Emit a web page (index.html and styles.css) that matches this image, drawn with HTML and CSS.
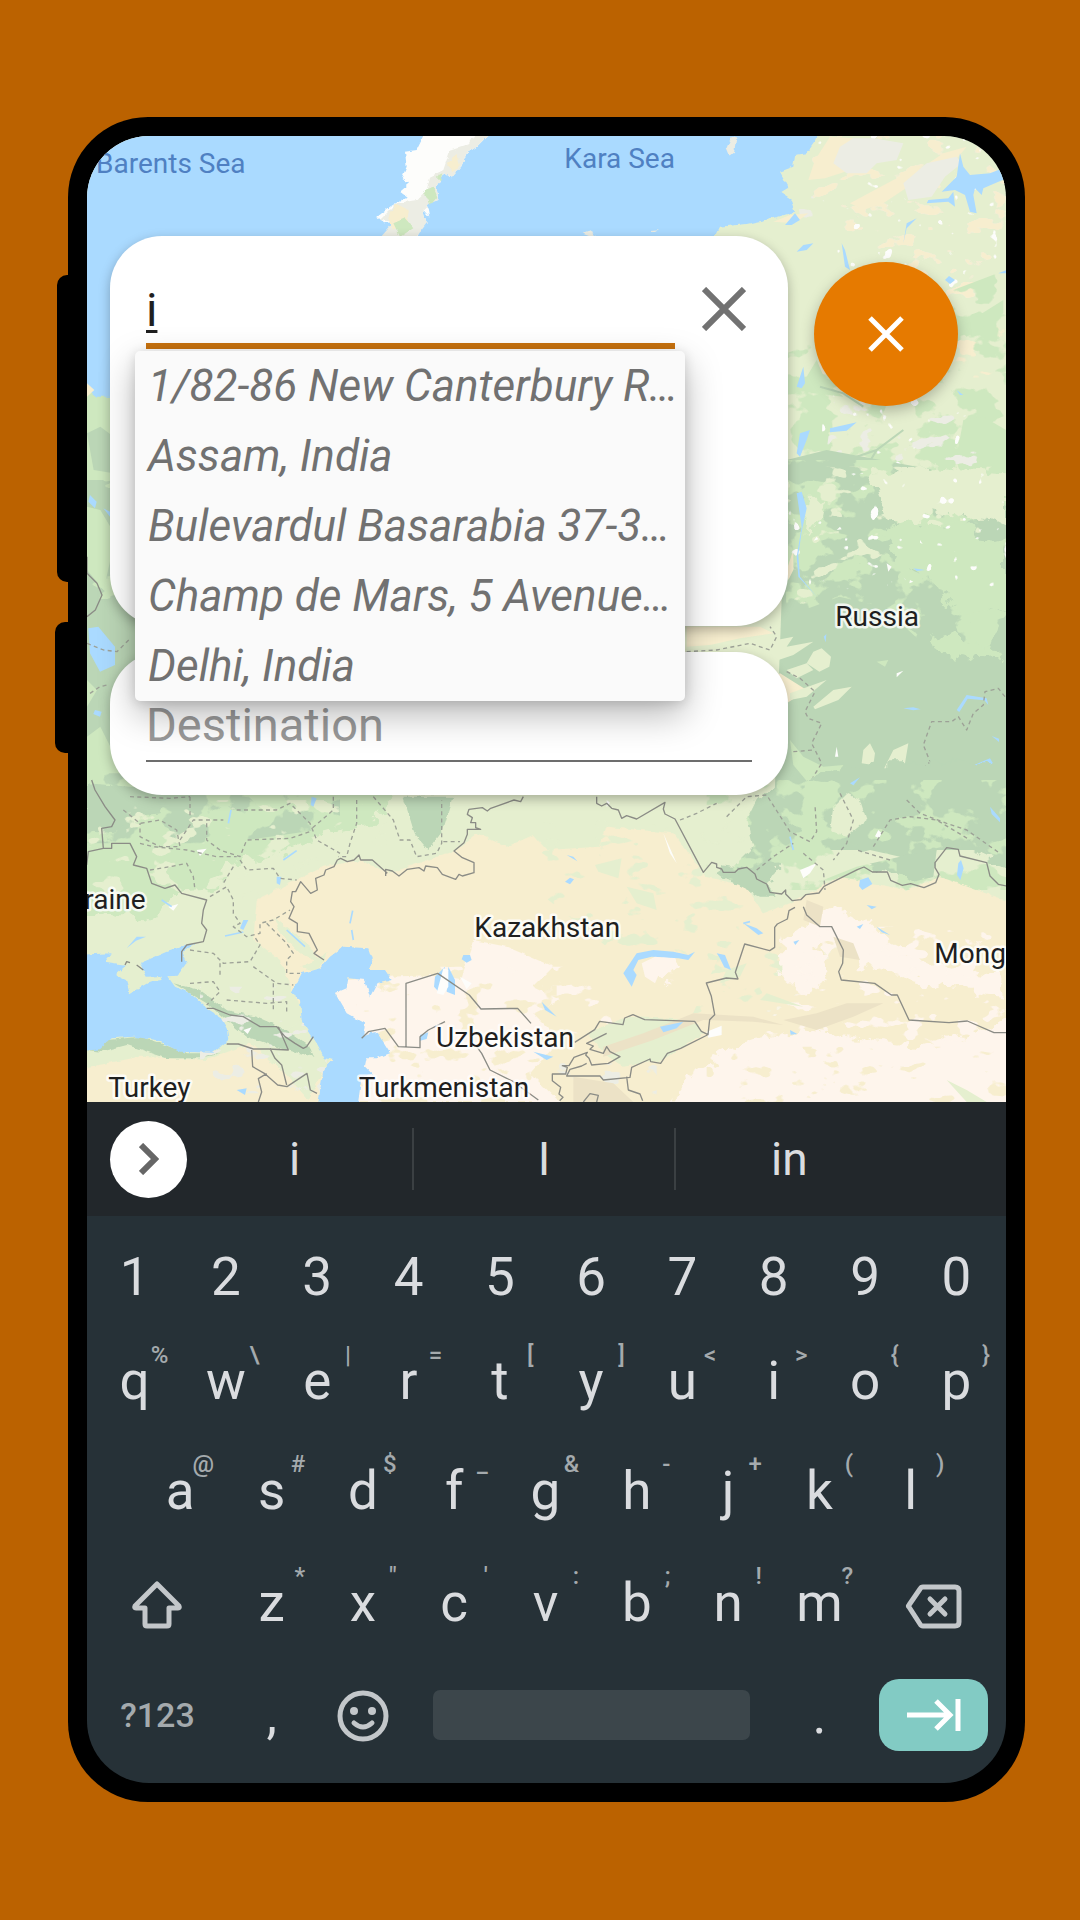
FILE: index.html
```html
<!DOCTYPE html>
<html lang="en">
<head>
<meta charset="utf-8">
<meta name="viewport" content="width=device-width, initial-scale=1">
<title>Route search</title>
<link rel="stylesheet" href="styles.css">
</head>
<body>
<main class="phone">
  <span class="side-key side-key-volume"></span>
  <span class="side-key side-key-power"></span>
  <div class="screen">
    <section class="app">
      <svg class="map" viewBox="141 108 2757 2898" preserveAspectRatio="xMidYMid slice" role="img" aria-label="Map of Russia and Central Asia">
        <defs>
          <filter id="patches" x="0" y="0" width="1" height="1" color-interpolation-filters="sRGB">
            <feTurbulence type="fractalNoise" baseFrequency=".008 .011" numOctaves="4" seed="4" result="n"/>
            <feColorMatrix in="n" type="matrix" values="0 0 0 0 0 0 0 0 0 0 0 0 0 0 0 24 0 0 0 -12.4" result="m"/>
            <feComposite in="SourceGraphic" in2="m" operator="in"/>
          </filter>
          <filter id="specks" x="0" y="0" width="1" height="1" color-interpolation-filters="sRGB">
            <feTurbulence type="fractalNoise" baseFrequency=".012 .02" numOctaves="3" seed="9" result="n"/>
            <feColorMatrix in="n" type="matrix" values="0 0 0 0 0 0 0 0 0 0 0 0 0 0 0 0 24 0 0 -15" result="m"/>
            <feComposite in="SourceGraphic" in2="m" operator="in"/>
          </filter>
          <filter id="dots" x="0" y="0" width="1" height="1" color-interpolation-filters="sRGB">
            <feTurbulence type="fractalNoise" baseFrequency=".025" numOctaves="2" seed="21" result="n"/>
            <feColorMatrix in="n" type="matrix" values="0 0 0 0 0 0 0 0 0 0 0 0 0 0 0 0 0 24 0 -17.2" result="m"/>
            <feComposite in="SourceGraphic" in2="m" operator="in"/>
          </filter>
          <filter id="rough" x="-.05" y="-.05" width="1.1" height="1.1">
            <feTurbulence type="fractalNoise" baseFrequency=".025" numOctaves="3" seed="2" result="n"/>
            <feDisplacementMap in="SourceGraphic" in2="n" scale="60" xChannelSelector="R" yChannelSelector="G"/>
          </filter>
          <filter id="coast" x="-.05" y="-.05" width="1.1" height="1.1">
            <feTurbulence type="fractalNoise" baseFrequency=".05" numOctaves="2" seed="6" result="n"/>
            <feDisplacementMap in="SourceGraphic" in2="n" scale="14" xChannelSelector="R" yChannelSelector="G"/>
          </filter>
        </defs>
        <rect class="steppe" x="100" y="60" width="2900" height="3000"/>

        <!-- northern tundra -->
        <g>
          <path class="rock" filter="url(#specks)" d="M2240 108h660v560l-300 60-170-330-150-50z"/>
          <path class="sand" filter="url(#specks)" d="M2240 108h660v800l-300-100-150-300-150-250z"/>
          <path class="snow" filter="url(#dots)" d="M2300 108h600v500h-500z"/>
          <g class="sand"><path d="M2370 110l70 5-50 50 25 50-60 20-50 5 20-60zM2430 310l130-70 90-40 60-40 70-20-50 60-110 50-90 60-60 20zM2200 365l50-20 55-5-40 30zM2330 790l30 60 55 10-20-70z"/></g>
          <g class="rock"><path d="M2440 115l60 0 90 15-20 50-60 10-30 30-60 0-40-30 20-50zM2590 250l70-60 90-20 15 20-50 40-40 60-70 10zM2780 108l90 0-30 40z"/></g>
          <path class="green" filter="url(#patches)" d="M2240 760l658-250v700h-658z"/>
          <path class="green" d="M2330 780l-30 50 20 50 90 10-50-40zM2740 665l70-15 80-50v40l-60 40-50 30-20-20zM2770 960l60-10 68 40v210l-120-30-30-90z"/>
          <path class="rock" filter="url(#specks)" d="M2380 900h400l60 300h-500z"/>
          <path class="snow" filter="url(#dots)" d="M2350 880h430l60 300h-500z"/>
          <path class="dark" d="M2240 1110l60 20 70 10 50-50 30-10-10 50-50 40-60 70-90 0z"/>
          <g class="sketch"><path d="M2420 1080l90-30 80-60M2480 1100l30-50M2340 860l70 20 60 40"/></g>
        </g>
        <path class="water" filter="url(#coast)" d="M90 60H2340L2330 118 2300 160 2265 165 2260 200 2220 215 2245 260 2220 275 2250 295 2265 335 2200 355 2120 372 2040 380 2015 430 1900 500H230V940L175 940 160 900 90 880z"/>
        <path class="water" d="M2760 160l10 40 20 25 60-5 50-20v35l-70 30-5 20-20-20-5 20 10 55-20-5-15-50-30-15-40 5 30-30 15-15zM2740 275l5 45-20-15-65 5-10 20 15-30 60-5zM2630 355l-30 30-10 45 10-60zM2405 430l10 20 15 60-15-10zM2320 430l-20 20-30 5 20-20zM2235 375l30-35 15 20-25 15zM2270 860l20-60 5 50-10 15zM2270 1060l10-60 30-10-10 30-20 50zM2370 985l80-18-30 25-50 5zM2875 520l25-10v10zM2715 540l12-12 18 12-15 12zM2750 870l20 15-10 0z"/>
        <g filter="url(#coast)">
          <path class="snow" d="M1160 90L1130 150 1095 155 1100 200 1085 235 1110 250 1080 275 1100 290 1050 320 1012 350 1035 370 1060 365 1020 430H1130L1140 375 1160 370 1150 330 1168 350 1160 310 1195 300 1190 260 1215 220 1235 235 1230 210 1260 205 1280 160 1310 140 1360 90z"/>
          <path class="rock" d="M1360 90L1310 140 1280 160 1260 205 1235 235 1215 220 1190 260 1195 300 1170 310 1150 330 1160 370 1130 410H1020L1060 365 1020 360 1070 310 1130 300 1160 270 1170 230 1210 210 1230 150 1290 130 1310 90z"/>
          <path class="sand" d="M1070 312l40 20-10 40-45 20-10-40zM1220 190l30-25 10 30-20 20z"/>
          <path class="green" d="M1150 270l30-10 12 30-20 25zM1060 370l35-15 25 30-40 25zM1190 230l20-10-5 25z"/>
          <path class="rock" d="M2075 108l-15 35 10 25 12-10 8-45zM1625 400l20-8 25 15v10zM1830 390l30-2-15 8z"/>
        </g>

        <!-- western strip and Siberia -->
        <path class="green" filter="url(#coast)" d="M120 850l50 40 60 0v260H120z"/>
        <path class="dark" d="M141 1000l40-20 40 30v110l-60-10z"/>
        <path class="sand" d="M141 850l22 20-22 20z"/>
        <g transform="translate(0 1140)">
          <path class="dark" d="M120 0h210v900H120z"/>
          <path class="green" filter="url(#specks)" d="M120 0h210v400H120z"/>
          <path class="green" d="M141 80l40 10 30 50v100l-20 90-50-60zM141 600l30 30-30 50zM141 770l40-30 40 80 50 70h-130z"/>
          <path class="water" d="M145 445l30-5 25 30 25 30v55l-45 20-30-55zM150 45l20 20-5 20-20-20zM190 85l20 10v15zM165 690l20 5-5 15-20-8z"/>
          <path class="dark" d="M2240-60l120-30 538 100v1100h-700z"/>
          <path class="green" filter="url(#patches)" d="M2240-60h658v580l-250-30-120-110-130-30-160 60z"/>
          <path class="steppe" filter="url(#specks)" d="M2240-40h658v250h-350l-308 200z"/>
          <path class="steppe" d="M2490-20l170-20 238 20v160l-60-30-80 10-60-40-80 60-60-20-40-70zM2310 50l40 0-20 90-30 40z" filter="url(#rough)"/>
          <path class="green" d="M2510 150l90-30 100 20 60-20 60 50 78 10v220l-70-20-50 30-60-50-40-60-90-40zM2665 480l70-30 40 30 100 30 23 30-120-10-60-10z" filter="url(#rough)"/>
          <path class="sand" d="M1940 440h220l40 20-100 15-90 20-70 5zM2240 270l20-60 0 60-15 30zM2180 600l40-20 80 50-30 20-30 20z"/>
          <g class="steppe"><path d="M2165 510l45-30 50-10-20 30 80-15-60 40-60 20zM2300 550l20-35 25-10 28 25-5 30-30 15zM2240 570l60-20 20 20-50 25zM2250 640l110-40-60 50-50 10zM2320 680l60-50 55-10-40 40-70 28zM2530 870l30-60 45-20-10 60-40 35-30 30zM2465 850l5-40 20-20 15 30-5 35z"/></g>
          <path class="green" d="M2250 780l40 50 60 30 60-5-30 50-70 10-50-60zM2710 930l90-30 98 40v80l-80-40zM2510 545l35-5-10 20z"/>
          <g class="snow"><path d="M2570 580l20-8-20 20zM2540 250l15 10-10 15zM2330 170l5 8-14 4zM2640 180l8 12-8-4zM2610 300l10 5-12 5zM2390 800l5 30-10 0zM2390 150l10-10 5 8z"/></g>
          <path class="snow" filter="url(#dots)" d="M2240-20h658v350h-658z"/>
          <g class="water"><path d="M2270 40l15-5 15 50-15 70-10 70 5 65 50 60-55-60-5-60 15-90zM2590 685l30-3 22 6-22 3zM2790 860l60-25 12 20-40 10-20 10zM2415 912l45-20 10 8-40 25zM2750 690l30-45 60 10 5 20-12-14-50-5-25 40zM2855 768l22 8v10zM2620 265l35 5-25 3zM2351 470l8-8-2 25z"/></g>
          <g class="border region"><path d="M2240 575l40 20 45 40-30 60 10 20 40 15-30 60 30 60-25 40-5 100M2260 815l60-5M2325 895l60 20 30 50 25 60M2895 650l-20-25-40 10-5 40-30 25-20 50-25-40-20 15-60 0-25 70 20 50-35 40-15 90-35 20 50 50M1940 515l90-5 100-20 60 20 20-40-20-30M150 640l30-20 20-5M141 490l50 20 40 5 40-40"/></g>
          <g class="border"><path d="M141 230l0 50 30 30 15 35-20 45-25 20M141 870l20 15-5 50 40 50 40 40"/></g>
        </g>

        <!-- eastern Europe to Mongolia -->
        <g transform="translate(0 2040)">
          <path class="green" filter="url(#rough)" d="M80-60H1100L1060 60 980 140 850 160 690 230 560 250 520 330 400 340 340 420 200 400 80 440z"/>
          <path class="dark" filter="url(#patches)" d="M120-20h780v160l-350 50H120z"/>
          <path class="dark" filter="url(#coast)" d="M141 10l250 20-30 70-80 10-60 50-80-10zM1090 50h150l-30 100-45 60-40-45z"/>
          <path class="steppe" filter="url(#specks)" d="M141 60h900v300h-900z"/>
          <path class="dark" filter="url(#rough)" d="M2080 130l120-120 300-60h420v320l-200-90-80 110-140-20-60-80-200 40-60 90-60 30-90-70z"/>
          <path class="green" filter="url(#patches)" d="M2000 0h898v330h-898z"/>
          <path class="steppe" filter="url(#coast)" d="M1950 80l200-20-30 60 20 80-60 60-90-10-60-50zM2380 80l40-40 40 20 20 60-60 50-50-20z"/>

          <path class="sand" filter="url(#coast)" d="M770 300L850 260 960 240 1050 280 1250 210 1310 160 1400 200 1480 165 1520 210 1680 200 1700 140 1900 160 2000 290 2120 320 2170 400 2250 370 2400 290 2600 330 2700 290 2920 370V1000H740L790 900 860 800 760 640 720 540 640 480 650 360z"/>
          <path class="sand" filter="url(#coast)" d="M100 870L300 830 500 840 630 790 700 850 800 880 820 1000H100z"/>
          <path class="steppe" filter="url(#specks)" d="M1500 120h650v420h-400l-250-200zM2050 500h350l-200 220h-250z"/>
          <path class="desert" filter="url(#coast)" d="M885 640L920 600 1050 590 1180 585 1260 600 1300 480 1400 500 1540 560 1480 620 1560 660 1480 700 1560 780 1470 880 1560 966H930V760z"/>
          <path class="desert" filter="url(#rough)" d="M1870 1000L1960 880 2100 790 2300 750 2500 780 2640 800 2920 720V1000zM2220 490L2300 430 2340 520 2360 600 2290 650 2230 600zM2300 420l80-40 100 40 80 80 100 50 230 40v60l-230-40-180-50-100-80-80 20zM1830 550l70-30 20 40-50 50z"/>
          <path class="desert" filter="url(#specks)" d="M1200 560h450l80 200h-400zM2340 440h558v526h-900z"/>
          <path class="sand" filter="url(#specks)" d="M950 600h600v366h-600zM2000 800h898v166h-898z"/>
          <path class="steppe" filter="url(#coast)" d="M780 560l60-25 20-20-10 30-20 30zM700 410l50 40 60 50 30 50-60-30-60-60zM1640 760l120-50 200 10 30 40-120 80-120 20-60-40zM780 720l40 60 55 60-30 40-40 80-70-80-60-60z"/>
          <path class="dark" filter="url(#coast)" d="M400 610l80 20 80 60 90 20 90 40 70 50 10 30-80-20-120-40-60-50-60-50zM141 810l60-30 100-10 60 20 80 30 100 0-60 15-100 0-120-40-80 20z"/>
          <path class="rock" filter="url(#specks)" d="M480 620h380v320h-380zM1550 850h300v116h-350z"/>
          <g class="soil"><path d="M1690 800l120-40 150-60 180 10 90 25-90-10-150-5-150 60-150 50zM2230 720l100-20 90-30 110 0-90 40-110 40zM2300 360l50 20-10 60-50-20zM2380 470l60 20 20 50-60-10zM1600 890l120 20 60 56h-180z"/></g>
          <path class="dark" filter="url(#coast)" d="M2090 260l60 10 30 40 30 40-50 0-60-30zM2570 230l120-20-10 80-60 15-50-30z"/>
          <g class="steppe"><path d="M1665 255l80-20-10 60-60-20zM1760 320l80 20 10 50-60-20zM2340 250l150-40 90 20-130 30-100 40zM2060 570l60-20-20 40-60 20zM2180 640l110 40-130-20zM2720 900l60 30 60 36h-60z"/></g>
          <path class="snow" d="M2000 755l45-18v28l-40 8zM1700 60l10 8-10 14zM2280 270l50-20-20 30-20 15zM1870 160l40 90-20-30zM2515 150l10 10-8 15-12-6zM470 210l30-4-20 22zM385 380l30-8-15 20zM610 750l25-8-12 20z"/>

          <g class="water" filter="url(#coast)">
            <path d="M100 525L215 520 195 545 260 555 225 585 258 600 270 640 330 605 365 600 360 588 320 590 300 550 380 515 470 487 425 515 440 550 410 590 385 592 405 620 450 640 500 685 540 710 560 745 565 780 520 818 420 815 350 780 280 770 215 775 180 808 100 815z"/>
            <path d="M755 640L785 580 840 565 870 530 910 500 985 505 998 545 990 570 1035 570 1055 600 1010 612 990 650 975 600 925 595 920 625 885 640 920 700 975 730 970 765 1010 755 1050 820 1010 835 980 835 975 860 1000 885 965 890 950 1000H830L850 870 880 840 855 835 830 790 785 720 780 660z"/>
          </g>
          <g class="water">
            <path d="M1750 580l40-60 50-10 60 5 45 10 20-10-20 25-30-5-80-5-40 10-15 30 10 15-15 35zM2030 520l25 5 18 45-20-8-15-30zM2110 430l40 15 20 15-15 5zM1860 740l70-15-20 20-40 12zM2460 300l25-8 12 20-30 18-10-12zM2755 250l8-10 8 25-10 35-10-15zM1580 225l20 5 12 14zM1575 305l15-12 12 5-12 15zM1185 590l30-30-15 80-18-20zM1225 560l20 40v45l-25-10zM1270 525l20 0 5 15-15 8-15-10zM1505 665l45 45-35-20zM1140 765l25-8-5 20-20 5zM1480 815l60 15-20 10zM590 930l30-5-5 20zM2250 750l22 12-20 2zM2260 485l18-5-12 15zM2480 375l30 5-15 8zM2510 440l40 25-25-8zM2450 440l20-8-10 15zM610 420l15 0-15 30-10-5zM710 290h14l-4 25-10-5zM815 50l15 5-10 25-8-5zM2430 10l30-18-20 24zM2850 80l30 35v12l-25-25zM260 505l30-35 28 0-30 12z"/>
          </g>
          <path class="snow" d="M1190 640l20-75 15 5v50l-15 25zM1260 590l35 20-15 18z"/>
          <path class="desert" d="M1805 550l40-20 50 5 5 20-40 20-15 35-30-20z"/>
          <path class="river" d="M730 240l40-28M565 130l8-40M930 430l8-38M935 450l5 30M555 468l55-12M365 360l30 20M2250 170l10 40M2110 430l20-5M740 450l55 50"/>

          <g class="border region">
            <path d="M270 50l120 5 60-5M250 90l50 40 60-10 50 30 10 50-60 0-60-30 0-40M420 180l40-60 70 0 20 0M500 130l0 50 40 30 60 20 20-50 130-5 60-20M450 50v60M590 90l120 0 40-20 60 60 20 50 70 40M880 50v40l-70 60M950 60v70l-20 60-10 40-25 0M1000 50l60 70 20 60 30 0 20 50 60-10 15-30v-130M1210 185h50M300 190l40 10 100 10 90 20 60 0M330 270l60-10 50-10 20 40 5 40M600 240l20 30 80-5 20 30 50 5M510 350l50-30 20 40 0 40 20 30-20 10 40 30 40-10 0-30 40-10 50-30M580 260l-30 50M680 430l60 60 20 30-20 20 0 40 40 0M450 510l70 10 30 30 80-5 30-50-20-30M540 550l0 40M640 560l70 50 50 5M450 610l70-5 20 30-40 40M700 610v80M560 660l120 10 60-5v30"/>
            <path d="M1920 120l50-20 60-30M2060 110l60-60 60-5 70 110 60 30 20-30-5-80M2150 270l50-40 60-40M2400 40l40 80-20 70-40 50M2550 240l-100-30M2500 200l50-80 60-10 80 10 100 60M2600 60l40 40 80 30 60 20 100 70M2290 220l60 50 5 60"/>
          </g>
          <g class="border">
            <path d="M155 0l10 30 30 50 30 40-10 20-30 5 5 60-45 10-5 40M190 205l25 0 0-15 55 0 20 40-10 25 40 10 15 45 40 15 30-10 20 25 75 20-10 30-5 40 15 20-10 35-50 10-15 20v30"/>
            <path d="M1450 50l-8 15-20-5-70 25-10 8-15-10-40 5-5 15 15 10-5 15 15 0 0 15 15 5-40 0 0 15-10 25-30 25 25 20 35 15 0 30-35 10-10-5-10 15-40-15-15-20-35-5-5 15-15-10-35 5-25 20-20-15-20-5 0 20M1042 280l-45-40-35 0-5-15-15 15-20 5-20-10-10 5-10 20-25 10-5 15-25 10 5 35-20 10-30-35-15 30-10 0-5 30 10 15-15 35 25 15 0 25 35 5 25 50-10 10 30 20M255 555l5-10 10 3M290 555l20 15"/>
            <path d="M1670 50l0 20 15 8 15-8 15 15 20 5 10 25 15-8 30 10 85-50-5 20 5 15 30 15 85 160 25-30 15 5 0 10 15 5 5 10 35 0 10-10 25-5 25 20 5 15 30 15 10 25 35 5 12-12 0 12 20 20 25-3 15-15 40-5 15-20 100-50 20-8 25 15 45 0 10 25 35 15 25-5 40 12 35-15 10-25-12-20 0-15 35-45 35 5 5 20 80 20 10 40 25 25 40 8M2290 380l10 25 40 35 35 0 35 70-2 40-12 25 8 25 100 10 50 35 18 0 35 75 120 8 55-5 80 35h50"/>
            <path d="M2265 382l-18 10-5 25-30 15-8 10 0 60-15 10-75-20-28 85 8 20-35-3-60 15 15 40 10 55-15 15-5 45-20-10-20-30-150-5-35-15-25 10-5 20-70-10-15 25-60 38M2002 765l-80 40-40 15-20 30-30-5-2-8-55 25-5 30-80 8-10-12-100 0 10-20 35-10 15-8M1700 760l-60 30 20 8-10 10 40 12 10-20 10 15 30 15-35 20-50 5-8-20-10-10 5-8-40 15-15 25-20 0 15 5-5 20-40 0 0 20 25 20-5 20 12 10-10 10M1760 890l5 40 35 12 8 20M1630 966l20-25 25 5-5 20"/>
            <path d="M965 775l20-20 50-10 40 55 65 3V770l25-20 50-25M1098 800V610l95-30 95 65 35 42 110-2 40 45M1310 800l15 20 25 50 70 35 75 55M500 685l20 0 50 20 40 5 50 30 50 0 25 30 30 20 25 15 10-5 20-30M715 740l30 70-60-3-45 0-45-15-35 0M635 810l3 50 35 20 40 35 28 5 60-40 10 50 20 10M690 805l15 30 20 20 15 60M655 966l10-30-10-40 25-15"/>
          </g>
        </g>

        <g class="sea-label">
          <text x="168" y="218">Barents Sea</text>
          <text x="1573" y="203">Kara Sea</text>
        </g>
        <g class="label">
          <text x="2386" y="1578">Russia</text>
          <text class="label-end" x="317" y="2427">Ukraine</text>
          <text x="1303" y="2512">Kazakhstan</text>
          <text x="2683" y="2590">Mongolia</text>
          <text x="1188" y="2842">Uzbekistan</text>
          <text x="205" y="2992">Turkey</text>
          <text x="956" y="2992">Turkmenistan</text>
        </g>
      </svg>

      <div class="search">
        <form class="stops">
          <div class="card card-origin">
            <div class="combo">
              <input class="field field-active" type="text" value="i" aria-label="Starting point" role="combobox" aria-expanded="true" aria-controls="places">
              <ul class="menu" id="places" role="listbox">
                <li class="option" role="option">1/82-86 New Canterbury R…</li>
                <li class="option" role="option">Assam, India</li>
                <li class="option" role="option">Bulevardul Basarabia 37-3…</li>
                <li class="option" role="option">Champ de Mars, 5 Avenue…</li>
                <li class="option" role="option">Delhi, India</li>
              </ul>
            </div>
            <button class="clear" type="button" aria-label="Clear">
              <svg viewBox="0 0 44 44"><path d="M2 2l40 40M42 2L2 42"/></svg>
            </button>
          </div>
          <div class="card card-destination">
            <input class="field field-idle" type="text" placeholder="Destination" aria-label="Destination">
          </div>
        </form>
        <button class="fab" type="button" aria-label="Close search">
          <svg viewBox="0 0 36 36"><path d="M2 2l32 32M34 2L2 34"/></svg>
        </button>
      </div>
    </section>

    <section class="suggestions">
      <button class="expand" type="button" aria-label="More">
        <svg viewBox="0 0 20 32"><path d="M2 2l14 14L2 30"/></svg>
      </button>
      <div class="words">
        <button class="word" type="button">i</button>
        <button class="word" type="button">I</button>
        <button class="word" type="button">in</button>
      </div>
    </section>

    <section class="keyboard">
      <div class="row">
        <button class="key">1</button><button class="key">2</button><button class="key">3</button><button class="key">4</button><button class="key">5</button><button class="key">6</button><button class="key">7</button><button class="key">8</button><button class="key">9</button><button class="key">0</button>
      </div>
      <div class="row">
        <button class="key">q<span class="hint">%</span></button><button class="key">w<span class="hint">\</span></button><button class="key">e<span class="hint">|</span></button><button class="key">r<span class="hint">=</span></button><button class="key">t<span class="hint">[</span></button><button class="key">y<span class="hint">]</span></button><button class="key">u<span class="hint">&lt;</span></button><button class="key">i<span class="hint">&gt;</span></button><button class="key">o<span class="hint">{</span></button><button class="key">p<span class="hint">}</span></button>
      </div>
      <div class="row row-inset">
        <button class="key">a<span class="hint">@</span></button><button class="key">s<span class="hint">#</span></button><button class="key">d<span class="hint">$</span></button><button class="key">f<span class="hint">_</span></button><button class="key">g<span class="hint">&amp;</span></button><button class="key">h<span class="hint">-</span></button><button class="key">j<span class="hint">+</span></button><button class="key">k<span class="hint">(</span></button><button class="key">l<span class="hint">)</span></button>
      </div>
      <div class="row">
        <button class="key key-wide" aria-label="Shift"><svg class="icon" viewBox="0 0 60 60"><path d="M30 11L8 33q-1 2 1 2h9v16q0 2 2 2h20q2 0 2-2V35h9q2 0 1-2z"/></svg></button>
        <button class="key">z<span class="hint">*</span></button><button class="key">x<span class="hint">"</span></button><button class="key">c<span class="hint">'</span></button><button class="key">v<span class="hint">:</span></button><button class="key">b<span class="hint">;</span></button><button class="key">n<span class="hint">!</span></button><button class="key">m<span class="hint">?</span></button>
        <button class="key key-wide" aria-label="Backspace"><svg class="icon" viewBox="0 0 60 60"><path d="M19 14h32q4 0 4 4v31q0 4-4 4H19q-2 0-3-2L5 34q-1-1 0-2l11-16q1-2 3-2zM26 26l15 15M41 26L26 41"/></svg></button>
      </div>
      <div class="row">
        <button class="key key-wide key-mode">?123</button>
        <button class="key">,</button>
        <button class="key" aria-label="Emoji"><svg class="icon" viewBox="0 0 60 60"><circle cx="30" cy="31" r="23"/><path d="M21 38q9 8 18 0"/><circle class="dot" cx="21" cy="26" r="4"/><circle class="dot" cx="39" cy="26" r="4"/></svg></button>
        <button class="key key-space" aria-label="Space"></button>
        <button class="key">.</button>
        <button class="key key-wide key-next" aria-label="Next"><svg class="icon" viewBox="0 0 60 60"><path d="M3 30h44M32 16l14 14-14 14M54 14v32"/></svg></button>
      </div>
    </section>
  </div>
</main>
</body>
</html>
```
FILE: styles.css
```css
* { box-sizing: border-box; }

body {
  margin: 0;
  padding: 117px 55px 118px 68px;
  background: #bb6200;
  font-family: Roboto, "Liberation Sans", sans-serif;
}

button {
  margin: 0;
  padding: 0;
  border: 0;
  background: none;
  color: inherit;
  font: inherit;
}

svg { display: block; }

/* device */
.phone {
  position: relative;
  padding: 19px;
  border-radius: 80px;
  background: #000;
}

.side-key {
  position: absolute;
  width: 24px;
  border-radius: 10px;
  background: #000;
}

.side-key-volume { left: -11px; top: 158px; height: 307px; }
.side-key-power { left: -13px; top: 505px; height: 131px; }

.screen {
  position: relative;
  display: flex;
  flex-direction: column;
  overflow: hidden;
  border-radius: 62px;
  background: #263137;
}

/* map */
.app {
  position: relative;
  padding: 100px 48px 307px 23px;
}

.map {
  position: absolute;
  inset: 0;
  width: 100%;
  height: 100%;
}

.water { fill: #aadaff; }
.steppe { fill: #e5efcf; }
.green { fill: #cee8bf; }
.dark { fill: #bbd6b6; }
.sand { fill: #f7eecf; }
.desert { fill: #fef5ec; }
.rock { fill: #ecede4; }
.snow { fill: #fdfdfb; }
.soil { fill: #ece2c6; }
.river { fill: none; stroke: #aadaff; stroke-width: 5; }
.sketch { fill: none; stroke: #bbd6b6; stroke-width: 6; }
.border { fill: none; stroke: #8b8c86; stroke-width: 4; stroke-linejoin: round; }
.region { stroke: #9da197; stroke-dasharray: 12 10; }

.sea-label {
  fill: #4f80c2;
  font-size: 84px;
}

.label {
  fill: #1f1f1f;
  stroke: #fff;
  stroke-opacity: .8;
  stroke-width: 15;
  stroke-linejoin: round;
  paint-order: stroke;
  font-size: 84px;
}

.label-end { text-anchor: end; }

/* search form */
.search {
  position: relative;
  display: flex;
  align-items: flex-start;
  gap: 26px;
}

.stops {
  display: flex;
  flex: 1;
  flex-direction: column;
  gap: 26px;
  min-width: 0;
}

.card {
  border-radius: 52px;
  background: #fff;
  box-shadow: 0 4px 12px rgba(0, 0, 0, .28);
}

.card-origin {
  display: flex;
  align-items: flex-start;
  gap: 27px;
  min-height: 390px;
  padding: 31px 42px 31px 36px;
}

.card-destination { padding: 33px 36px; }

.combo {
  position: relative;
  flex: 1;
  min-width: 0;
}

.field {
  display: block;
  width: 100%;
  padding: 4px 0 0;
  border: 0;
  outline: 0;
  background: none;
  color: #1f1f1f;
  font: 47px/54px Roboto, "Liberation Sans", sans-serif;
}

.field-active {
  height: 82px;
  padding-top: 8px;
  border-bottom: 6px solid #c8720f;
  text-decoration: underline 3px;
  text-underline-offset: 4px;
}

.field-idle {
  height: 77px;
  border-bottom: 2px solid #6d6d6d;
}

.field-idle::placeholder { color: #999; opacity: 1; }

.menu {
  position: absolute;
  z-index: 1;
  top: 84px;
  right: -10px;
  left: -11px;
  margin: 0;
  padding: 0;
  border-radius: 5px;
  background: #fafafa;
  box-shadow: 0 14px 36px rgba(0, 0, 0, .28), 0 2px 12px rgba(0, 0, 0, .14);
  list-style: none;
}

.option {
  overflow: hidden;
  padding: 0 0 0 13px;
  color: #717171;
  font-size: 44px;
  font-style: italic;
  line-height: 70px;
  white-space: nowrap;
}

.clear {
  width: 44px;
  margin-top: 20px;
}

.clear path { fill: none; stroke: #727272; stroke-width: 6; }

.fab {
  display: grid;
  place-items: center;
  width: 144px;
  height: 144px;
  margin-top: 26px;
  border-radius: 50%;
  background: #e67a00;
  box-shadow: 0 5px 14px rgba(0, 0, 0, .25);
}

.fab svg { width: 36px; }
.fab path { fill: none; stroke: #fff; stroke-width: 5; }

/* suggestions */
.suggestions {
  display: flex;
  align-items: center;
  height: 114px;
  padding: 0 103px 0 23px;
  background: #22272b;
  color: #dadcdf;
}

.expand {
  display: grid;
  place-items: center;
  width: 77px;
  height: 77px;
  margin-right: -10px;
  border-radius: 50%;
  background: #fff;
}

.expand svg { width: 20px; }
.expand path { fill: none; stroke: #666; stroke-width: 6; }

.words {
  display: grid;
  flex: 1;
  grid-template-columns: 236fr 262fr 230fr;
}

.word {
  font-size: 46px;
  line-height: 62px;
}

.word + .word { border-left: 2px solid #3b4043; }

/* keyboard */
.keyboard {
  display: grid;
  grid-template-rows: 98px 109px repeat(3, 112px);
  padding: 12px 4px 12px 2px;
  color: #dadcdf;
}

.row {
  display: grid;
  grid-template-columns: repeat(20, 1fr);
}

.row-inset .key:first-child { grid-column: 2 / span 2; }

.key {
  position: relative;
  display: grid;
  grid-column: span 2;
  place-items: center;
  font-size: 53px;
  line-height: 62px;
}

.key-wide { grid-column: span 3; }

.hint {
  position: absolute;
  top: 16px;
  right: 12px;
  color: #a4aaad;
  font-size: 24px;
  font-weight: 500;
  line-height: 26px;
}

.icon {
  width: 60px;
  fill: none;
  stroke: #c3c7ca;
  stroke-width: 5;
  stroke-linecap: round;
  stroke-linejoin: round;
}

.icon .dot { fill: #c3c7ca; stroke: none; }

.key-mode {
  color: #a4aaad;
  font-size: 34px;
  font-weight: 500;
}

.key-space {
  grid-column: span 8;
  align-self: center;
  height: 50px;
  margin: 0 24px;
  border-radius: 7px;
  background: #3c464b;
}

.key-next {
  align-self: center;
  height: 72px;
  margin: 0 14px;
  border-radius: 20px;
  background: #82cbc4;
}

.key-next .icon {
  stroke: #fff;
  stroke-linecap: butt;
  stroke-linejoin: miter;
}
```
